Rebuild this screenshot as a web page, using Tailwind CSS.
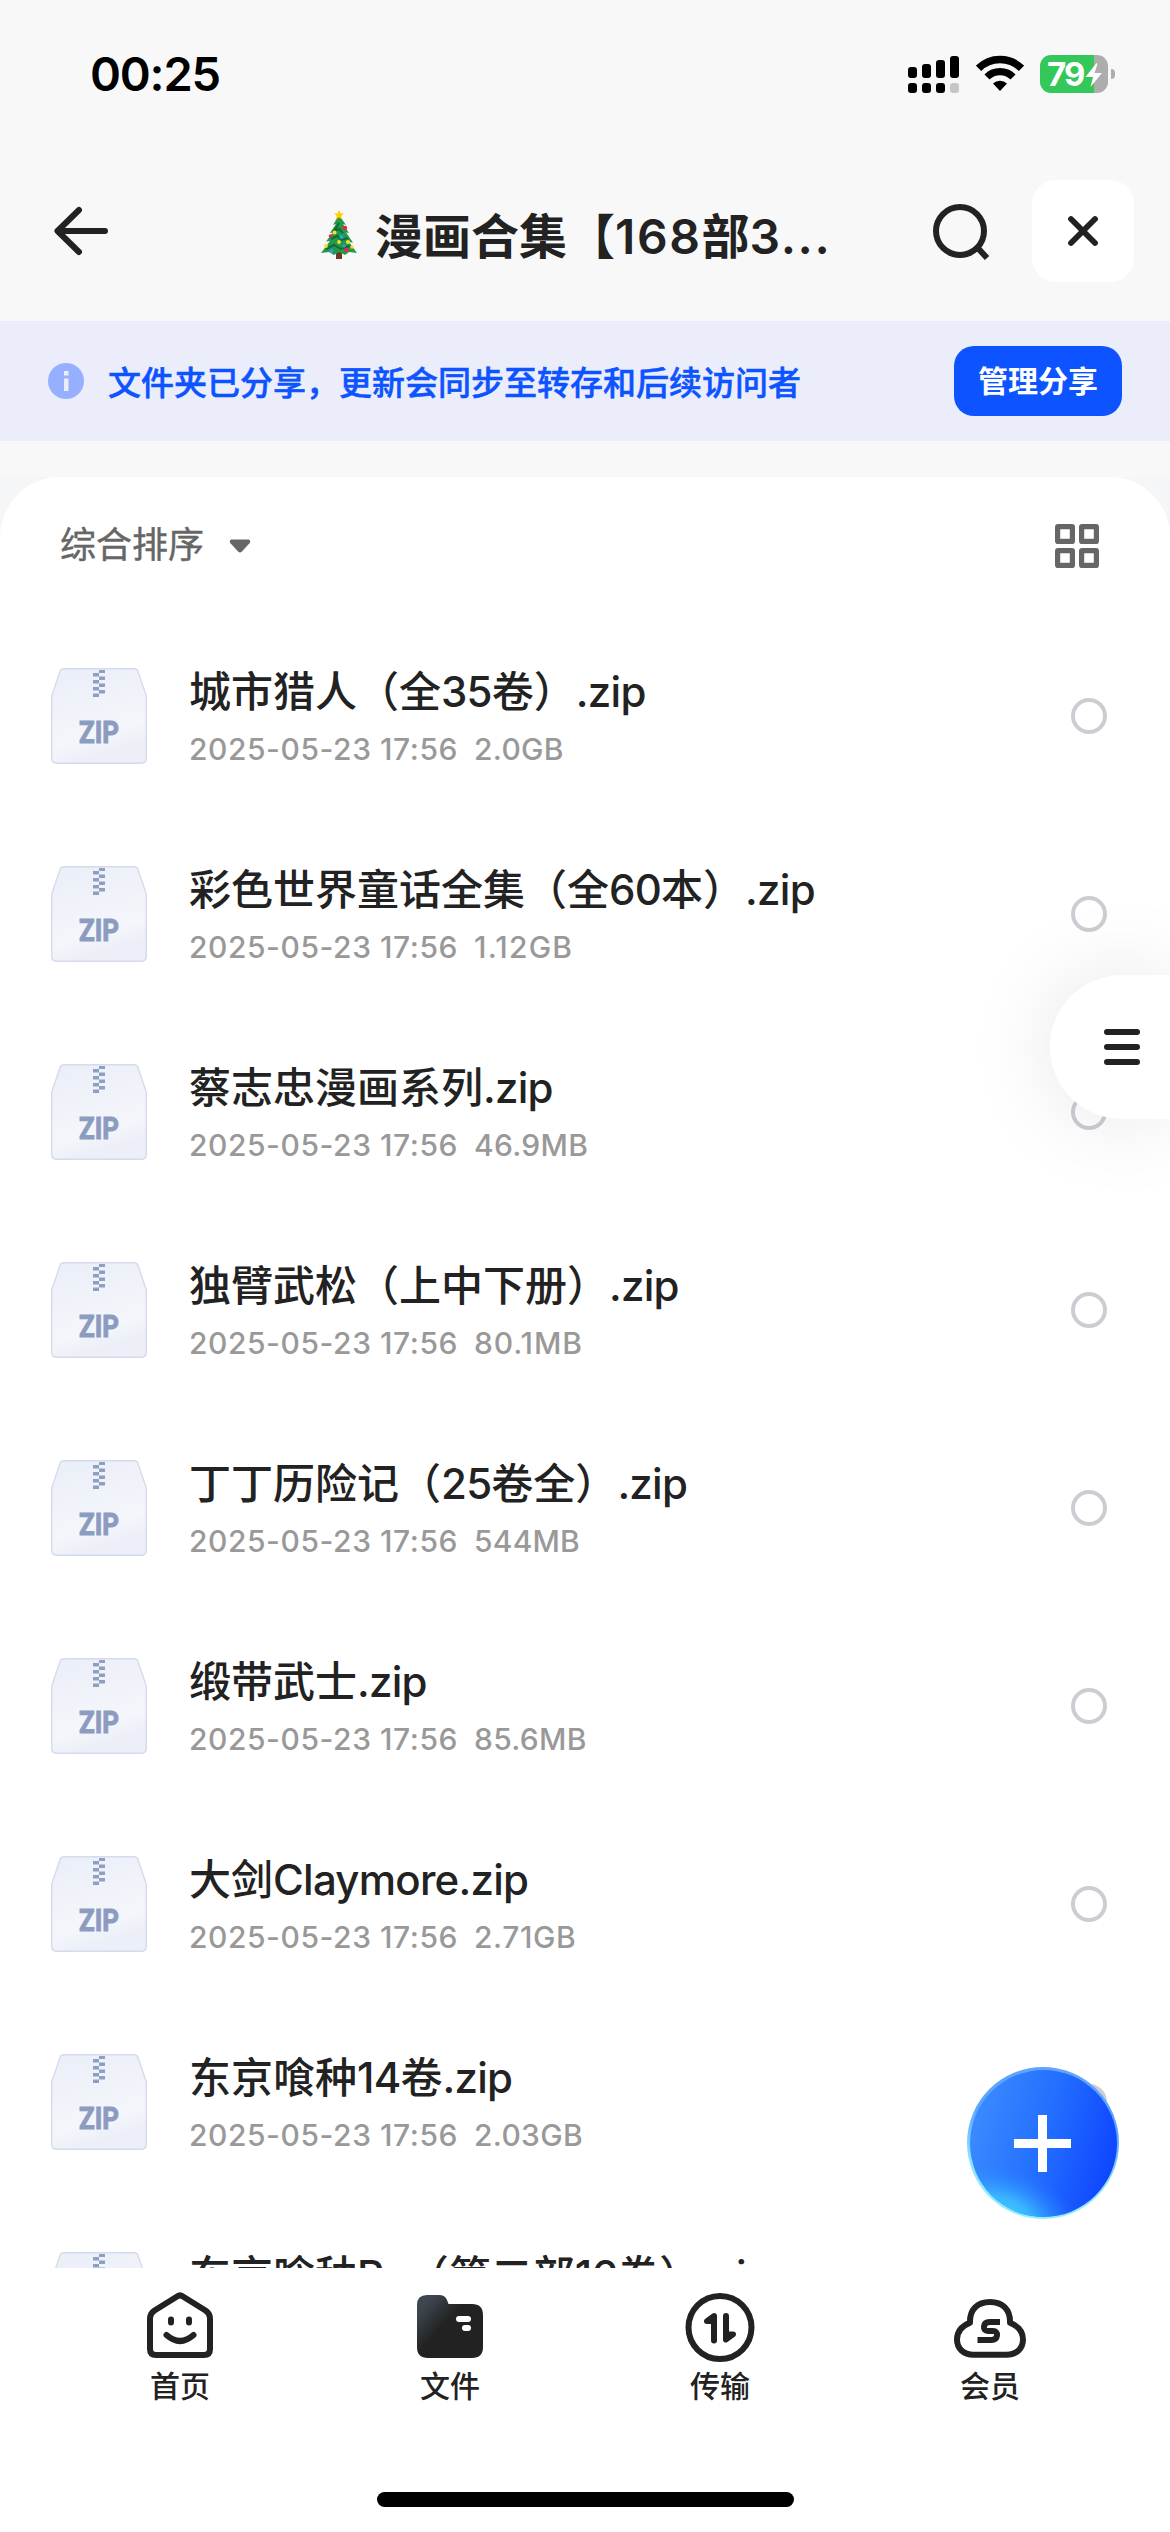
<!DOCTYPE html>
<html lang="zh-CN">
<head>
<meta charset="utf-8">
<title>文件</title>
<script src="https://cdn.jsdelivr.net/npm/@tailwindcss/browser@4"></script>
</head>
<body class="bg-white">
<div class="relative flex h-[2532px] w-[1170px] flex-col overflow-hidden bg-[#f8f8f8] font-['Inter','Noto_Sans_CJK_SC',sans-serif] text-[#222]">

  <!-- Status bar -->
  <header class="flex h-[150px] shrink-0 items-start justify-between pl-[90px] pr-[55px]">
    <div class="mt-[44px] text-[47px] leading-[60px] font-semibold tracking-[-1.2px] text-black">00:25</div>
    <div class="mt-[55px] flex">
      <svg class="mr-[17px] h-[38px] w-[51px]" viewBox="0 0 51 38">
        <rect x="0" y="12" width="9" height="11" rx="3"/><rect x="14" y="9" width="9" height="14" rx="3"/><rect x="28" y="5" width="9" height="18" rx="3"/><rect x="42" y="1" width="9" height="22" rx="3"/>
        <rect x="0" y="28" width="9" height="10" rx="3"/><rect x="14" y="28" width="9" height="10" rx="3"/><rect x="28" y="28" width="9" height="10" rx="3"/><rect x="42" y="28" width="9" height="10" rx="3" fill="#c6c6c6"/>
      </svg>
      <svg class="mr-[16px] h-[38px] w-[48px]" viewBox="0 0 48 38">
        <path d="M2.6 13.3a30.500 30.500 0 0 1 42.800 0" fill="none" stroke="#000" stroke-width="7.500"/>
        <path d="M11 22a18.500 18.500 0 0 1 26 0" fill="none" stroke="#000" stroke-width="7.200"/>
        <path d="M17 28.500a10 10 0 0 1 14 0L24 36z"/>
      </svg>
      <div class="relative flex h-[38px] w-[68px] items-center overflow-hidden rounded-[11px] bg-[linear-gradient(90deg,#34c759_54px,#adadad_54px)]">
        <span class="ml-[7px] text-[33px] leading-[38px] font-bold tracking-[-1.8px] text-white">79</span>
        <svg class="absolute top-[7px] left-[45px] h-[26px] w-[18px]" viewBox="0 0 18 26"><path d="M11.500 1 0.500 15H8L5.500 25 17 11H9.500L12.500 2z" fill="#fff"/></svg>
      </div>
      <div class="mt-[14px] ml-[3px] h-[10px] w-[4px] rounded-r-full bg-[#adadad]"></div>
    </div>
  </header>

  <!-- Title bar -->
  <nav class="flex h-[171px] shrink-0 items-start pr-[36px] pl-[54px] pt-[30px]">
    <svg class="mt-[26px] h-[50px] w-[54px]" viewBox="0 0 54 50"><path d="M25 4 3.500 25 25 46M4 25H51" fill="none" stroke="#222" stroke-width="6" stroke-linecap="round" stroke-linejoin="round"/></svg>
    <svg class="mt-[30px] ml-[212px] h-[50px] w-[38px]" viewBox="0 0 38 50">
      <rect x="16" y="41" width="6" height="8" fill="#6b3a1e"/>
      <path d="M19 5 13 15l3-1-6 9 3-.5-7 9 4-.5L1 43l8-1 5 3 5-3 6 3 4-3 8 1-8-11 4 .5-7-10 3 .5-6-9 3 1z" fill="#23994a"/>
      <path d="m19 13-5 8 5-2 4 4M11 29l6-3 5 4 6-2M6 39l8-4 7 4 9-3" fill="none" stroke="#126a34" stroke-width="2"/>
      <path d="m19 0 1.500 3.500H24l-2.800 2.400 1 3.600L19 7.600l-3.200 1.900 1-3.600L14 3.500h3.500z" fill="#fc0"/>
      <g fill="#e8274b"><circle cx="25" cy="18" r="2.200"/><circle cx="10.500" cy="26" r="1.800"/><circle cx="26.500" cy="40" r="2.300"/></g>
      <g fill="#f8dc35"><circle cx="14.500" cy="22.500" r="2"/><circle cx="28" cy="32" r="2.100"/><circle cx="19" cy="32" r="1.900"/><circle cx="6" cy="36" r="1.900"/><circle cx="32" cy="37" r="1.700"/></g>
      <g fill="#2c9df0"><circle cx="21.500" cy="27" r="2"/><circle cx="11.500" cy="41" r="2"/><circle cx="24" cy="36" r="1.600"/></g>
    </svg>
    <h1 class="mt-[22px] ml-[17px] w-[462px] text-[48px] leading-[70px] font-semibold whitespace-nowrap">漫画合集【<span class="tracking-[1.6px]">168</span>部<span class="tracking-[1.6px]">3...</span></h1>
    <div class="flex flex-1 justify-end">
    <svg class="mt-[24px] mr-[43px] h-[56px] w-[56px] shrink-0" viewBox="0 0 56 56"><circle cx="27" cy="27" r="24" fill="none" stroke="#222" stroke-width="6"/><path d="m43 42 11 12" stroke="#222" stroke-width="6"/></svg>
    <div class="flex size-[102px] shrink-0 items-center justify-center rounded-[24px] bg-white">
      <svg class="size-[32px]" viewBox="0 0 32 32"><path d="m4 4 24 24M28 4 4 28" stroke="#222" stroke-width="5.800" stroke-linecap="round"/></svg>
    </div>
    </div>
  </nav>

  <!-- Share notice -->
  <section class="flex h-[120px] shrink-0 items-center bg-[#ebeefa] pr-[48px] pl-[48px]">
    <svg class="size-[36px]" viewBox="0 0 36 36"><circle cx="18" cy="18" r="18" fill="#97afff"/><path d="M16 8h4.500v4.500H16zM16 15.500h4.500V28H16z" fill="#ebeefa"/></svg>
    <p class="mt-[4px] ml-[24px] flex-1 text-[33px] leading-[48px] font-medium whitespace-nowrap text-[#0d53ff] [-webkit-text-stroke:0.5px_#0d53ff]">文件夹已分享，更新会同步至转存和后续访问者</p>
    <button class="h-[70px] w-[168px] rounded-[20px] bg-[#0d53ff] text-[30px] leading-[68px] font-bold text-white">管理分享</button>
  </section>

  <!-- File list -->
  <div class="mt-[36px] min-h-0 flex-1 bg-[#f5f6f8]">
  <main class="h-full overflow-hidden rounded-t-[60px] bg-white">
    <div class="mb-[2px] flex h-[138px] items-center pr-[71px] pl-[60px]">
      <span class="mt-[-2px] text-[36px] leading-[52px] text-[#666] [-webkit-text-stroke:0.4px_#666]">综合排序</span>
      <svg class="ml-[25px] h-[16px] w-[22px]" viewBox="0 0 22 16"><path d="M3 1.500h16c2 0 3 2 1.500 3.800l-7.800 8.500c-1 1-2.400 1-3.400 0L1.500 5.300C0 3.500 1 1.500 3 1.500z" fill="#666"/></svg>
      <svg class="ml-auto size-[44px]" viewBox="0 0 44 44" fill="none" stroke="#666" stroke-width="5.200"><rect x="2.600" y="2.600" width="14.800" height="14.800" rx=".5"/><rect x="26.600" y="2.600" width="14.800" height="14.800" rx=".5"/><rect x="2.600" y="26.600" width="14.800" height="14.800" rx=".5"/><rect x="26.600" y="26.600" width="14.800" height="14.800" rx=".5"/></svg>
    </div>
    <ul id="files"></ul>
  </main>
  </div>

  <!-- Tab bar -->
  <footer class="h-[264px] shrink-0 bg-white px-[45px] pt-[22px]">
    <div class="grid grid-cols-4">
      <div class="flex flex-col items-center">
        <svg class="h-[75px] w-[80px]" viewBox="0 0 80 75" fill="none" stroke="#222" stroke-width="6" stroke-linecap="round" stroke-linejoin="round"><path d="M37.500 6.300Q40 4.500 42.500 6.300L65.500 20.500Q70 23.500 70 29V59Q70 65 64 65H16Q10 65 10 59V29Q10 23.500 14.500 20.500Z"/><path d="M26.500 45q13.500 12 27 0"/><path d="M31 29.500v3M49 29.500v3"/></svg>
        <span class="mt-[-1px] text-[30px] leading-[44px] font-medium">首页</span>
      </div>
      <div class="flex flex-col items-center">
        <svg class="h-[75px] w-[80px]" viewBox="0 0 80 75"><defs><linearGradient id="fg" x1="0" y1="0" x2=".75" y2=".65"><stop offset=".2" stop-color="#3d464f"/><stop offset=".62" stop-color="#222"/></linearGradient></defs><path d="M17 5H29Q35 5 37 10L38.500 14H62Q73 14 73 25V57Q73 68 62 68H18Q7 68 7 57V15Q7 5 17 5Z" fill="url(#fg)"/><rect x="46" y="26" width="15" height="6" rx="3" fill="#fff"/><rect x="52" y="35" width="9" height="6" rx="3" fill="#fff"/></svg>
        <span class="mt-[-1px] text-[30px] leading-[44px] font-medium">文件</span>
      </div>
      <div class="flex flex-col items-center">
        <svg class="h-[75px] w-[80px]" viewBox="0 0 80 75"><circle cx="40" cy="37.500" r="31.500" fill="none" stroke="#222" stroke-width="6"/><path d="M37 26v24.500a3 3 0 0 1-6 0V34h-4c-3 0-4-3-2-5l7.500-5.500c2-1.500 4.500 0 4.500 2.500zM43 50V26a3 3 0 0 1 6 0v15.500h4c3 0 4 3 2 5L47.500 52c-2 1.500-4.500 0-4.500-2z" fill="#222"/></svg>
        <span class="mt-[-1px] text-[30px] leading-[44px] font-medium">传输</span>
      </div>
      <div class="flex flex-col items-center">
        <svg class="h-[75px] w-[80px]" viewBox="0 0 80 75" fill="none" stroke="#222" stroke-width="6"><path d="M23.500 64.700C13.500 64.700 7 58.500 7 49.500C7 41.500 12 36 20 32.800C19.500 19.500 27.500 12 40 12C52.500 12 60.500 19.500 60 32.800C68 36 73 41.500 73 49.500C73 58.500 66.500 64.700 56.500 64.700Z" stroke-linejoin="round"/><path d="M50 32H39.500Q34.500 32 34 36.500Q33.500 41 38 41H43Q47.500 41 47 45.500Q46.500 50 41.500 50H27.500"/></svg>
        <span class="mt-[-1px] text-[30px] leading-[44px] font-medium">会员</span>
      </div>
    </div>
    <div class="mx-auto mt-[84px] h-[15px] w-[417px] rounded-full bg-black"></div>
  </footer>

  <!-- Side menu handle -->
  <div class="absolute top-[975px] right-0 flex h-[144px] w-[120px] flex-col justify-center gap-[9px] rounded-l-full bg-white pl-[54px] shadow-[0_0_90px_rgba(0,0,0,0.1)]">
    <i class="h-[6px] w-[36px] rounded-full bg-[#222]"></i><i class="h-[6px] w-[36px] rounded-full bg-[#222]"></i><i class="h-[6px] w-[36px] rounded-full bg-[#222]"></i>
  </div>

  <!-- Add button -->
  <svg class="absolute top-[2066px] left-[966px] size-[154px]" viewBox="0 0 154 154">
    <defs>
      <linearGradient id="a" x1="0" y1=".35" x2="1" y2=".6"><stop offset="0" stop-color="#3c8bff"/><stop offset=".5" stop-color="#236fff"/><stop offset="1" stop-color="#0f45ff"/></linearGradient>
      <radialGradient id="b" gradientUnits="userSpaceOnUse" cx="0" cy="0" r="1" gradientTransform="translate(38 150) rotate(22) scale(86 50)"><stop offset="0" stop-color="#42ceff"/><stop offset=".35" stop-color="#3bbcff" stop-opacity=".9"/><stop offset="1" stop-color="#2878ff" stop-opacity="0"/></radialGradient>
      <linearGradient id="c" x1=".6" y1="0" x2=".4" y2="1"><stop offset="0" stop-color="#62a4fa"/><stop offset=".35" stop-color="#5aa5fc"/><stop offset=".7" stop-color="#8ce4fb"/><stop offset="1" stop-color="#90effc"/></linearGradient>
    </defs>
    <circle cx="77" cy="77" r="76" fill="url(#c)"/>
    <circle cx="77.500" cy="77.500" r="73.500" fill="url(#a)"/><circle cx="77.500" cy="77.500" r="73.500" fill="url(#b)"/>
    <path d="M76.500 49v57M48 77.500h57" stroke="#fff" stroke-width="9"/>
  </svg>
</div>

<template id="row">
  <li class="flex h-[198px] items-center pr-[63px] pl-[51px]">
    <svg class="size-[96px] shrink-0" viewBox="0 0 96 96">
      <defs><linearGradient id="z" x1="0" y1="0" x2=".3" y2="1"><stop offset="0" stop-color="#eaeef7"/><stop offset=".78" stop-color="#f4f6fb"/><stop offset="1" stop-color="#eceef8"/></linearGradient></defs>
      <path d="M13 .7H83Q86 .7 87 3.500L95.300 28V90Q95.300 95.300 90 95.300H6Q.7 95.300 .7 90V28L9 3.500Q10 .7 13 .7Z" fill="url(#z)" stroke="#d5dbec" stroke-width="1.400"/>
      <path d="M48 2h6v3h-6zM42 5h6v3.500h-6zM48 8.500h6V12h-6zM42 12h6v3.500h-6zM48 15.500h6V19h-6zM42 19h6v3.500h-6zM48 22h6v3.500h-6zM42 25.500h6V29h-6z" fill="#8e9fc2"/>
      <text x="28" y="74.500" textLength="40" lengthAdjust="spacingAndGlyphs" font-family="Roboto, sans-serif" font-weight="700" font-size="31.500" fill="#8b9cc0" stroke="#8b9cc0" stroke-width="1">ZIP</text>
    </svg>
    <div class="ml-[42px] flex-1 pb-[4px] whitespace-nowrap">
      <div class="name text-[42px] leading-[60px] font-medium"></div>
      <div class="mt-[9px] flex gap-[16px] text-[30px] leading-[36px] font-medium text-[#999]"><span class="tracking-[0.56px]">2025-05-23 17:56</span><span class="size"></span></div>
    </div>
    <i class="size-[36px] rounded-full border-4 border-[#cdccd3]"></i>
  </li>
</template>
<script>
// name, size, letter spacing of the size label
const files = [
  ['城市猎人（全35卷）.zip', '2.0GB', 0.3],
  ['彩色世界童话全集（全60本）.zip', '1.12GB', 1.2],
  ['蔡志忠漫画系列.zip', '46.9MB', 0.3],
  ['独臂武松（上中下册）.zip', '80.1MB', 0.9],
  ['丁丁历险记（25卷全）.zip', '544MB', 0.2],
  ['缎带武士.zip', '85.6MB', 0.3],
  ['大剑Claymore.zip', '2.71GB', 0.6],
  ['东京喰种14卷.zip', '2.03GB', 0.3],
  ['东京喰种Re（第二部16卷）.zip', '1.98GB', 0.6],
];
const tpl = document.getElementById('row');
for (const [name, size, spacing] of files) {
  const el = tpl.content.cloneNode(true);
  // Latin runs are set slightly tighter than the Chinese text
  el.querySelector('.name').innerHTML = name.replace(/[\x21-\x7e]+/g, '<span class="tracking-[-0.75px]">$&</span>');
  const label = el.querySelector('.size');
  label.textContent = size;
  label.style.letterSpacing = spacing + 'px';
  document.getElementById('files').append(el);
}
</script>
</body>
</html>
